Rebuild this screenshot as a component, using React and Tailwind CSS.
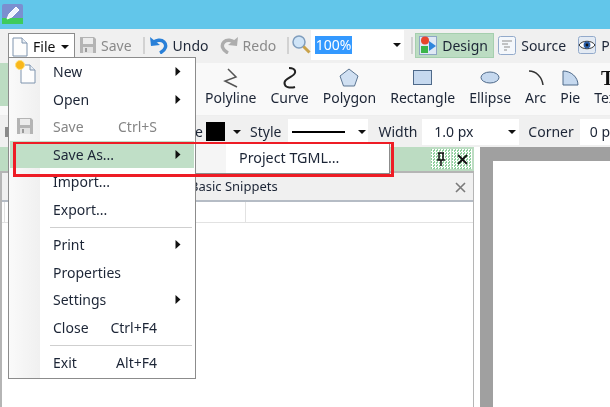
const font = { fontFamily: '"Noto Sans", sans-serif' }

function Caret({ className = "" }) {
  return (
    <svg width="8" height="4" viewBox="0 0 8 4" className={className}>
      <path d="M0 0h8L4 4z" fill="#111" />
    </svg>
  )
}

function ArrowRight() {
  return (
    <svg width="6" height="9" viewBox="0 0 6 9">
      <path d="M0.5 0L5.5 4.5L0.5 9z" fill="#111" />
    </svg>
  )
}

function PageIcon() {
  return (
    <svg width="16" height="20" viewBox="0 0 16 20">
      <path d="M1 1h9l5 5v13H1z" fill="#fdfdfd" stroke="#7f94ae" />
      <path d="M10 1v5h5" fill="#e8eef5" stroke="#7f94ae" />
    </svg>
  )
}

function Floppy({ size = 18 }) {
  return (
    <svg width={size} height={size} viewBox="0 0 18 18">
      <path d="M1 1h14l2 2v14H1z" fill="#b4b4b4" />
      <rect x="4" y="2" width="10" height="6" fill="#ececec" />
      <rect x="4" y="11" width="10" height="6" fill="#e2e2e2" />
      <rect x="6" y="12" width="2" height="4" fill="#9a9a9a" />
    </svg>
  )
}

function UndoIcon({ color, flip }) {
  return (
    <svg width="20" height="18" viewBox="0 0 20 18" className={flip ? "-scale-x-100" : ""}>
      <path d="M1 1l1 9 9-1z" fill={color} />
      <path d="M4 7c3-3 8-4 11-1 3 3 2 8-4 11" fill="none" stroke={color} strokeWidth="3.4" />
    </svg>
  )
}

function Separator() {
  return <div className="w-[2px] h-[17px] bg-[#d2d2d2]" />
}

function DesignIcon() {
  return (
    <svg width="18" height="20" viewBox="0 0 18 20">
      <rect x="0.5" y="1.5" width="17" height="18" fill="#dfe9f5" stroke="#8ea6c5" />
      <circle cx="6" cy="5.5" r="4" fill="#e8452c" />
      <rect x="2" y="11" width="7" height="7" fill="#3cb54a" />
      <path d="M10 6l7 5-7 5z" fill="#2f86dc" />
    </svg>
  )
}

function SourceIcon() {
  return (
    <svg width="18" height="19" viewBox="0 0 18 19">
      <rect x="0.5" y="0.5" width="17" height="18" rx="2" fill="#f4f7fb" stroke="#93aacb" />
      <path d="M4 5h10M4 8h6M6 11h6M6 14h3" stroke="#8d8d8d" fill="none" />
    </svg>
  )
}

function EyeIcon() {
  return (
    <svg width="18" height="18" viewBox="0 0 18 18">
      <rect x="0.5" y="0.5" width="17" height="17" rx="2" fill="#e3eaf3" stroke="#93aacb" />
      <path d="M1 9c3-5 13-5 16 0-3 5-13 5-16 0z" fill="#fff" stroke="#333" />
      <circle cx="9" cy="9" r="3.4" fill="#2a5ea8" />
      <circle cx="9" cy="9" r="1.4" fill="#111" />
    </svg>
  )
}

function Magnifier() {
  return (
    <svg width="20" height="22" viewBox="0 0 20 22">
      <circle cx="8" cy="8" r="6" fill="#cfe4f7" stroke="#7f9dbd" strokeWidth="1.5" />
      <path d="M12.5 12.5l6 6" stroke="#c9a24a" strokeWidth="3" />
    </svg>
  )
}

function ToolItem({ label, children }) {
  return (
    <div className="flex flex-col items-center px-[7px] shrink-0">
      <div className="h-[25px] flex items-center justify-center">{children}</div>
      <span className="text-[14px] leading-[19px] text-[#1c2536] -mt-[2px]">{label}</span>
    </div>
  )
}

function MenuItem({ label, shortcut, arrow, disabled, active, icon }) {
  return (
    <div className={`relative flex items-center h-[27.5px] pl-[43px] ${active ? "bg-[#c0dfc7]" : ""}`}>
      {icon && <div className="absolute left-[6px] top-[4px]">{icon}</div>}
      <span className={`text-[14px] ${disabled ? "text-[#858585]" : "text-[#1c2536]"}`}>{label}</span>
      {shortcut && (
        <span className={`absolute right-[37px] text-[14px] ${disabled ? "text-[#858585]" : "text-[#1c2536]"}`}>
          {shortcut}
        </span>
      )}
      {arrow && (
        <div className="absolute right-[13px] top-[9px]">
          <ArrowRight />
        </div>
      )}
    </div>
  )
}

function MenuSeparator() {
  return (
    <div className="h-[8px] flex items-center pl-[40px] pr-[2px]">
      <div className="h-[1px] w-full bg-[#cfcfcf]" />
    </div>
  )
}

export default function App() {
  return (
    <div className="relative w-[610px] h-[407px] overflow-hidden bg-white flex flex-col blur-[0.5px]" style={font}>
      {/* title bar */}
      <div className="h-[29px] bg-[#62c6ea] flex items-start pl-[2px] pt-[4px] shrink-0">
        <svg width="21" height="20" viewBox="0 0 21 20">
          <rect width="21" height="20" rx="2" fill="#7b8fd0" />
          <rect y="14" width="21" height="6" fill="#3ecb5c" />
          <path d="M5 15l2-5 7-7 3 3-7 7z" fill="#eef4ff" stroke="#fff" />
        </svg>
      </div>

      {/* main toolbar */}
      <div className="h-[34px] pb-[2px] bg-[#f0f0f0] flex items-center shrink-0 text-[14px] whitespace-nowrap [&>*]:shrink-0">
        <div className="ml-[8px] mt-[4px] w-[67px] h-[28px] self-start bg-white border border-[#8c8c8c] border-b-0 flex items-center pl-[3px] pb-[2px] text-[#111]">
          <PageIcon />
          <span className="ml-[5px]">File</span>
          <Caret className="ml-[6px]" />
        </div>
        <div className="ml-[4px]">
          <Floppy />
        </div>
        <span className="ml-[4px] text-[#8a8a8a]">Save</span>
        <div className="ml-[11px]">
          <Separator />
        </div>
        <div className="ml-[4px]">
          <UndoIcon color="#2a80d8" />
        </div>
        <span className="ml-[4px] text-[#1c2536]">Undo</span>
        <div className="ml-[10px]">
          <UndoIcon color="#adadad" flip />
        </div>
        <span className="ml-[4px] text-[#8a8a8a]">Redo</span>
        <div className="ml-[11px]">
          <Separator />
        </div>
        <div className="ml-[2px]">
          <Magnifier />
        </div>
        <div className="h-[30px] w-[93px] bg-white flex items-center pl-[4px] pr-[3px] justify-between">
          <span className="bg-[#3399ff] text-white leading-[18px] px-[0.5px]">100%</span>
          <Caret />
        </div>
        <div className="ml-[7px]">
          <Separator />
        </div>
        <div className="ml-[2px] h-[25px] w-[79px] bg-[#bcdcc2] border border-[#a5cfae] flex items-center pl-[3px] text-[#1c2536]">
          <DesignIcon />
          <span className="ml-[5px]">Design</span>
        </div>
        <div className="ml-[4px]">
          <SourceIcon />
        </div>
        <span className="ml-[5px] text-[#1c2536]">Source</span>
        <div className="ml-[12px]">
          <EyeIcon />
        </div>
        <span className="ml-[5px] text-[#1c2536]">Preview</span>
      </div>

      {/* shape toolbar */}
      <div className="relative h-[53px] bg-[#f9f9f9] flex items-start pl-[198px] pt-[2px] shrink-0 border-b border-[#eeeeee]">
        <div className="absolute left-0 top-0 w-[9px] h-[43px] bg-[#bcdcc2]" />
        <ToolItem label="Polyline">
          <svg width="16" height="20" viewBox="0 0 16 20">
            <path d="M5 1l8 8-11 4 12 6" fill="none" stroke="#555" strokeWidth="1.5" />
          </svg>
        </ToolItem>
        <ToolItem label="Curve">
          <svg width="16" height="22" viewBox="0 0 16 22">
            <path d="M7 1c7 0 8 5 3 8S1 14 3 18c1 3 7 3 10 2" fill="none" stroke="#222" strokeWidth="2" />
          </svg>
        </ToolItem>
        <ToolItem label="Polygon">
          <svg width="20" height="19" viewBox="0 0 20 19">
            <path d="M10 1l9 7-3.5 10h-11L1 8z" fill="#d0e0f2" stroke="#5c7693" />
          </svg>
        </ToolItem>
        <ToolItem label="Rectangle">
          <svg width="19" height="15" viewBox="0 0 19 15">
            <rect x="0.5" y="0.5" width="18" height="14" fill="#c6d9ef" stroke="#4f6a8a" />
          </svg>
        </ToolItem>
        <ToolItem label="Ellipse">
          <svg width="20" height="13" viewBox="0 0 20 13">
            <ellipse cx="10" cy="6.5" rx="9" ry="5.5" fill="#c6d9ef" stroke="#4f6a8a" />
          </svg>
        </ToolItem>
        <ToolItem label="Arc">
          <svg width="16" height="16" viewBox="0 0 16 16">
            <path d="M1 1c7 0 13 6 14 14" fill="none" stroke="#333" strokeWidth="1.5" />
          </svg>
        </ToolItem>
        <ToolItem label="Pie">
          <svg width="17" height="16" viewBox="0 0 17 16">
            <path d="M1 1c8 0 15 6 15 14H1z" fill="#c6d9ef" stroke="#4f6a8a" />
          </svg>
        </ToolItem>
        <ToolItem label="Text">
          <span className="text-[20px] leading-[20px] font-bold text-[#111]" style={{ fontFamily: '"Liberation Serif", serif' }}>
            T
          </span>
        </ToolItem>
      </div>

      {/* style toolbar */}
      <div className="h-[31px] bg-[#f0f0f0] flex items-center shrink-0 text-[14px] text-[#1c2536] whitespace-nowrap [&>*]:shrink-0">
        <div className="ml-[5px] w-[3px] h-[10px] bg-[#8a8a8a]" />
        <span className="ml-[139px] w-[56px] text-right">Stroke</span>
        <div className="w-[19px] h-[19px] ml-[3px] bg-black" />
        <Caret className="ml-[8px]" />
        <span className="ml-[9px]">Style</span>
        <div className="ml-[7px] w-[80px] h-[26px] bg-white flex items-center justify-between pl-[4px] pr-[2px]">
          <div className="w-[53px] h-[2px] bg-black" />
          <Caret />
        </div>
        <span className="ml-[10px]">Width</span>
        <div className="ml-[5px] w-[97px] h-[26px] bg-white flex items-center justify-between pl-[12px] pr-[3px]">
          <span>1.0 px</span>
          <Caret />
        </div>
        <span className="ml-[9px]">Corner</span>
        <div className="ml-[6px] w-[40px] h-[26px] bg-white flex items-center pl-[10px]">0 px</div>
      </div>

      {/* body */}
      <div className="flex-1 flex min-h-0">
        <div className="w-[474px] flex flex-col shrink-0">
          <div className="h-[24px] bg-[#bcdcc2] flex items-center justify-end gap-[1px] pr-[2px] shrink-0">
            <div className="w-[20px] h-[20px] bg-[repeating-conic-gradient(#ffffff_0_25%,#8fd09e_0_50%)] bg-[length:3px_3px] flex items-center justify-center">
              <svg width="10" height="14" viewBox="0 0 10 14">
                <path d="M2 1h6M3 1v7M7 1v7M1 8h8M5 8v6" stroke="#111" strokeWidth="1.5" fill="none" />
              </svg>
            </div>
            <div className="w-[20px] h-[20px] bg-[repeating-conic-gradient(#ffffff_0_25%,#8fd09e_0_50%)] bg-[length:3px_3px] flex items-center justify-center">
              <svg width="11" height="11" viewBox="0 0 11 11">
                <path d="M1 1l9 9M10 1l-9 9" stroke="#111" strokeWidth="1.8" />
              </svg>
            </div>
          </div>
          <div className="flex-1 flex flex-col border-t-[2px] border-r-[1px] border-l-[2px] border-[#b5b5b5] bg-white">
            <div className="h-[29px] bg-[#f0f0f0] border-b-[2px] border-[#b5bcc5] flex items-center justify-between pl-[188px] pr-[7px] pt-[1px] shrink-0">
              <span className="text-[13px] text-[#1c2536]">Basic Snippets</span>
              <svg width="11" height="11" viewBox="0 0 11 11">
                <path d="M1 1l9 9M10 1l-9 9" stroke="#7a7a7a" strokeWidth="1.6" />
              </svg>
            </div>
            <div className="h-[21px] border-b border-[#e2e2e2] pl-[2px] shrink-0">
              <div className="w-[242px] h-full border-x border-[#e2e2e2]" />
            </div>
          </div>
        </div>
        <div className="flex-1 ml-[6px] bg-[#a0a0a0] pl-[13px] pt-[14px]">
          <div className="w-full h-full bg-white" />
        </div>
      </div>

      {/* file menu */}
      <div className="absolute left-[8px] top-[57px] w-[188px] h-[322px] bg-white border border-[#8c8c8c] px-[1px]">
        <div className="absolute left-0 top-0 bottom-0 w-[31px] bg-gradient-to-r from-[#fafafa] to-[#f0f0f0]" />
        <MenuItem
          label="New"
          arrow
          icon={
            <div className="relative left-[4px] top-[2px]">
              <PageIcon />
              <div className="absolute -left-[5px] -top-[4px] w-[10px] h-[10px] rounded-full bg-[#f9b71c] border border-[#ffe27a]" />
            </div>
          }
        />
        <MenuItem label="Open" arrow />
        <MenuItem label="Save" shortcut="Ctrl+S" disabled icon={<Floppy />} />
        <MenuItem label="Save As..." arrow active />
        <MenuItem label="Import..." />
        <MenuItem label="Export..." />
        <MenuSeparator />
        <MenuItem label="Print" arrow />
        <MenuItem label="Properties" />
        <MenuItem label="Settings" arrow />
        <MenuItem label="Close" shortcut="Ctrl+F4" />
        <MenuSeparator />
        <MenuItem label="Exit" shortcut="Alt+F4" />
      </div>

      {/* save as submenu */}
      <div className="absolute left-[195px] top-[142px] w-[195px] h-[32px] bg-white border border-[#8c8c8c] flex items-center pl-[43px]">
        <div className="absolute left-0 top-0 bottom-0 w-[30px] bg-[#f5f5f5]" />
        <span className="relative text-[14.3px] text-[#1c2536]">Project TGML...</span>
      </div>

      {/* red callout */}
      <div className="absolute left-[13px] top-[142px] w-[381px] h-[35px] border-[3px] border-t-[2px] border-[#ee1c25]" />
    </div>
  )
}
